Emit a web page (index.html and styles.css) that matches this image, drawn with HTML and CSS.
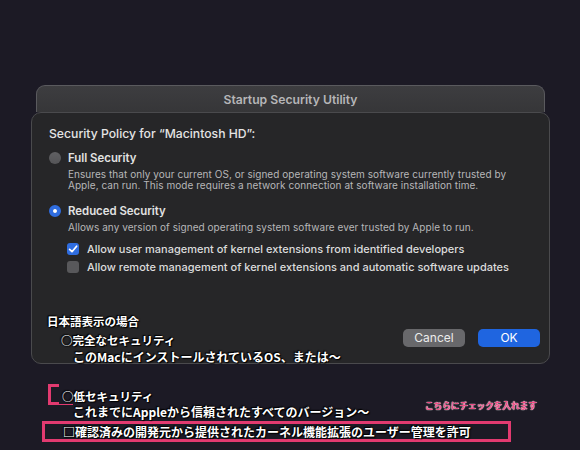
FILE: index.html
```html
<!DOCTYPE html>
<html lang="ja">
<head>
<meta charset="utf-8">
<title>Startup Security Utility</title>
<link rel="stylesheet" href="styles.css">
</head>
<body>
<div class="stage">
  <div class="titlebar">Startup Security Utility</div>
  <div class="sheet">
    <div class="heading">Security Policy for “Macintosh HD”:</div>

    <div class="option">
      <span class="radio"></span>
      <span class="opt-label">Full Security</span>
    </div>
    <div class="desc">Ensures that only your current OS, or signed operating system software currently trusted by<br>Apple, can run. This mode requires a network connection at software installation time.</div>

    <div class="option option-gap">
      <span class="radio radio-on"></span>
      <span class="opt-label">Reduced Security</span>
    </div>
    <div class="desc">Allows any version of signed operating system software ever trusted by Apple to run.</div>

    <div class="check-row first-check">
      <span class="checkbox checkbox-on">
        <svg viewBox="0 0 12 12" width="12" height="12"><path d="M2.6 6.3 L5 8.7 L9.6 3.2" fill="none" stroke="#fff" stroke-width="1.7" stroke-linecap="round" stroke-linejoin="round"/></svg>
      </span>
      <span class="check-label">Allow user management of kernel extensions from identified developers</span>
    </div>
    <div class="check-row">
      <span class="checkbox"></span>
      <span class="check-label">Allow remote management of kernel extensions and automatic software updates</span>
    </div>

    <div class="footer">
      <div class="notes">
        <div class="jp jp-title">日本語表示の場合</div>
        <div class="jp jp-opt">○完全なセキュリティ</div>
        <div class="jp jp-sub jp-last">このMacにインストールされているOS、または〜</div>
      </div>
      <div class="buttons">
        <button class="btn btn-cancel">Cancel</button>
        <button class="btn btn-ok">OK</button>
      </div>
    </div>
  </div>

  <div class="below">
    <span class="mark-small"></span>
    <div class="jp jp-opt"><span class="cover">○低セキュリティ</span></div>
    <div class="jp jp-sub">これまでにAppleから信頼されたすべてのバージョン〜</div>
    <div class="callout">こちらにチェックを入れます</div>
    <div class="mark-box"><span class="jp">□確認済みの開発元から提供されたカーネル機能拡張のユーザー管理を許可</span></div>
  </div>
</div>
</body>
</html>
```

FILE: styles.css
```css
html, body {
  margin: 0;
  padding: 0;
}
body {
  background: #1c1a25;
  width: 580px;
  height: 450px;
  overflow: hidden;
  font-family: Inter, "Noto Sans", "Liberation Sans", sans-serif;
}
.stage {
  padding: 85px 30px 0 31px;
}
.titlebar {
  margin: 0 5px;
  height: 27px;
  box-sizing: border-box;
  background: linear-gradient(#3d3d40, #363638);
  border: 1px solid #5a5a5e;
  border-bottom: none;
  border-radius: 9px 9px 0 0;
  color: #b6b6b8;
  font-size: 12.2px;
  font-weight: 600;
  text-align: center;
  line-height: 28px;
}
.sheet {
  height: 252px;
  box-sizing: border-box;
  background: #262628;
  border: 1px solid #4a4a4d;
  border-radius: 10px;
  padding: 12px 9px 0 17px;
  color: #e4e4e4;
}
.heading {
  font-size: 12.2px;
  font-weight: 500;
  line-height: 18px;
}
.option {
  display: flex;
  align-items: center;
  height: 18px;
  margin-top: 6px;
}
.option-gap {
  margin-top: 11px;
}
.radio {
  width: 12px;
  height: 12px;
  border-radius: 50%;
  background: linear-gradient(#606063, #555558);
  margin-right: 7px;
  box-sizing: border-box;
}
.radio-on {
  background: #2f6de0;
  border: 4px solid #2f6de0;
  background-clip: padding-box;
  position: relative;
}
.radio-on::after {
  content: "";
  position: absolute;
  inset: 0;
  border-radius: 50%;
  background: #fff;
}
.opt-label {
  font-size: 11.4px;
  font-weight: 600;
  color: #e2e2e2;
}
.desc {
  margin-top: 2px;
  padding-left: 19px;
  font-size: 10px;
  line-height: 11px;
  color: #b7b7b9;
  letter-spacing: 0.05px;
}
.check-row {
  display: flex;
  align-items: center;
  height: 16px;
  margin-top: 2px;
  padding-left: 18px;
}
.first-check {
  margin-top: 8px;
}
.checkbox {
  width: 12px;
  height: 12px;
  border-radius: 3px;
  background: #58585b;
  margin-right: 8px;
  display: flex;
}
.checkbox-on {
  background: #2f6de0;
}
.check-label {
  font-size: 11px;
  font-weight: 500;
  color: #dcdcdc;
}
.footer {
  display: flex;
  justify-content: space-between;
  align-items: flex-start;
  margin-top: 38px;
}
.notes {
  margin-left: -2px;
}
.jp {
  font-family: "Noto Sans CJK JP", "Noto Sans", sans-serif;
  font-weight: 700;
  font-size: 11.5px;
  line-height: 16px;
  color: #fff;
  text-shadow: 0 0 2px #000, 1px 1px 1px #000, -1px -1px 1px #000;
  white-space: nowrap;
}
.jp-opt {
  margin-top: 3px;
  padding-left: 14px;
}
.jp-sub {
  padding-left: 26px;
  font-size: 12px;
}
.jp-last {
  line-height: 17px;
}
.buttons {
  display: flex;
  gap: 13px;
  margin-top: 16px;
}
.btn {
  width: 62px;
  height: 18px;
  border: none;
  border-radius: 5px;
  font-family: Inter, "Noto Sans", sans-serif;
  font-size: 12px;
  color: #ececec;
  padding: 0;
  line-height: 18px;
}
.btn-cancel {
  background: #68686b;
}
.btn-ok {
  background: #1f65e0;
  color: #fff;
}
.below {
  position: relative;
  padding-top: 24px;
}
.below .jp-opt {
  margin-top: 0;
  padding-left: 28px;
  position: relative;
  z-index: 1;
}
.below .jp-sub {
  padding-left: 42px;
}
.cover {
  background: #1c1a25;
  padding: 4px 0 0 3px;
}
.mark-small {
  position: absolute;
  left: 17px;
  top: 20px;
  width: 25px;
  height: 21px;
  box-sizing: border-box;
  border: 3px solid #e23a70;
}
.callout {
  position: absolute;
  left: 394px;
  top: 35px;
  font-family: "Noto Sans CJK JP", sans-serif;
  font-weight: 700;
  font-size: 8.6px;
  line-height: 12px;
  color: #ec4b82;
  text-shadow: 0 0 1px #fff, 0 0 1px #fff;
  white-space: nowrap;
}
.mark-box {
  margin: 1px 0 0 11px;
  width: 469px;
  height: 21px;
  box-sizing: border-box;
  border: 3px solid #e23a70;
  padding-left: 18px;
  display: flex;
  align-items: center;
}
.mark-box .jp {
  font-size: 12px;
  line-height: 15px;
}
```
